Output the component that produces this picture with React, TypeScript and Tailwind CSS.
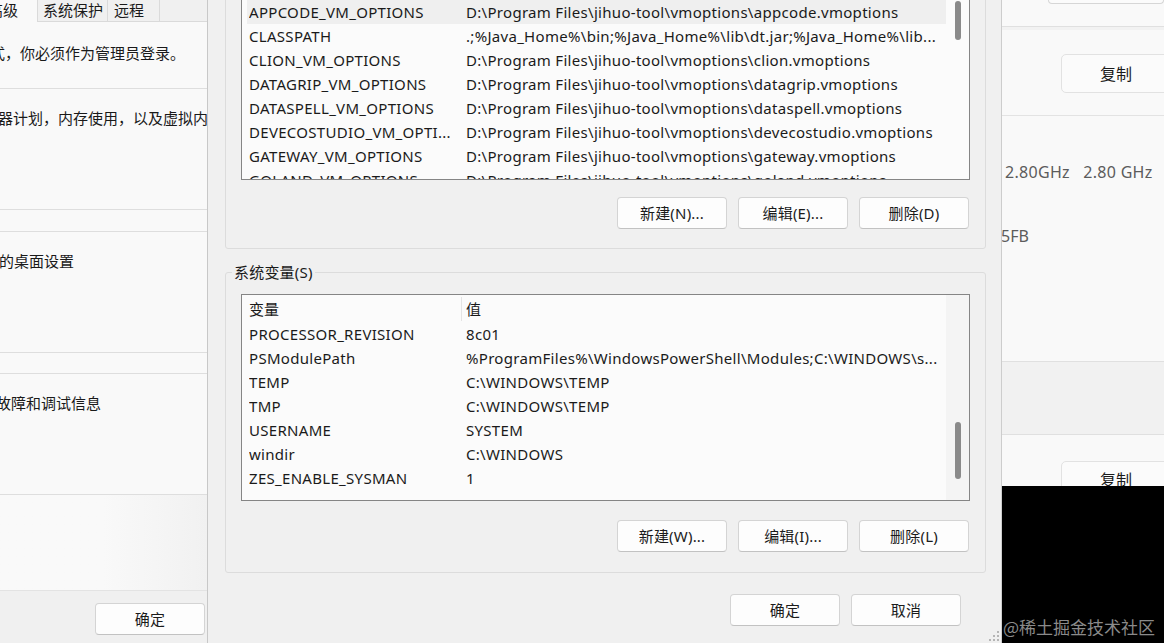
import React from "react";

type Row = [string, string];

const userVars: Row[] = [
  ["APPCODE_VM_OPTIONS", "D:\\Program Files\\jihuo-tool\\vmoptions\\appcode.vmoptions"],
  ["CLASSPATH", ".;%Java_Home%\\bin;%Java_Home%\\lib\\dt.jar;%Java_Home%\\lib..."],
  ["CLION_VM_OPTIONS", "D:\\Program Files\\jihuo-tool\\vmoptions\\clion.vmoptions"],
  ["DATAGRIP_VM_OPTIONS", "D:\\Program Files\\jihuo-tool\\vmoptions\\datagrip.vmoptions"],
  ["DATASPELL_VM_OPTIONS", "D:\\Program Files\\jihuo-tool\\vmoptions\\dataspell.vmoptions"],
  ["DEVECOSTUDIO_VM_OPTI...", "D:\\Program Files\\jihuo-tool\\vmoptions\\devecostudio.vmoptions"],
  ["GATEWAY_VM_OPTIONS", "D:\\Program Files\\jihuo-tool\\vmoptions\\gateway.vmoptions"],
  ["GOLAND_VM_OPTIONS", "D:\\Program Files\\jihuo-tool\\vmoptions\\goland.vmoptions"],
];

const systemVars: Row[] = [
  ["PROCESSOR_REVISION", "8c01"],
  ["PSModulePath", "%ProgramFiles%\\WindowsPowerShell\\Modules;C:\\WINDOWS\\s..."],
  ["TEMP", "C:\\WINDOWS\\TEMP"],
  ["TMP", "C:\\WINDOWS\\TEMP"],
  ["USERNAME", "SYSTEM"],
  ["windir", "C:\\WINDOWS"],
  ["ZES_ENABLE_SYSMAN", "1"],
];

function WinButton({ label }: { label: string }) {
  return (
    <button className="flex h-[32px] w-[110px] items-center justify-center rounded-[4px] border border-[#d4d4d4] border-b-[#c2c2c2] bg-[#fdfdfd] text-[15px] leading-[20px] tracking-[0.2px] text-[#1b1b1b]">
      {label}
    </button>
  );
}

function VarRow({ row, selected }: { row: Row; selected?: boolean }) {
  return (
    <div
      className={
        selected
          ? "flex h-[24px] items-center whitespace-nowrap bg-[#efefef] pl-[2px] tracking-[0.3px]"
          : "flex h-[24px] items-center whitespace-nowrap pl-[2px] tracking-[0.3px]"
      }
    >
      <div className="w-[217px] shrink-0 overflow-hidden">{row[0]}</div>
      <div className="overflow-hidden">{row[1]}</div>
    </div>
  );
}

export default function App() {
  return (
    <div className="relative h-[643px] w-[1164px] overflow-hidden bg-[#f0f0f0] font-['Noto_Sans','Noto_Sans_CJK_SC',sans-serif] text-[15px] leading-[20px] text-[#1a1a1a]">
      {/* left window: system properties, advanced tab */}
      <div className="absolute left-0 top-0 flex h-full w-[208px] flex-col overflow-hidden border-r border-[#c8c8c8] bg-[#f9f9f9]">
        <div className="flex h-[22px] shrink-0 border-b border-[#dadada] bg-[#f0f0f0] text-[15px] leading-[20px]">
          <div className="-mb-px w-[38px] shrink-0 overflow-hidden whitespace-nowrap border-r border-[#dadada] bg-[#f9f9f9]">
            <span className="ml-[-12px] inline-block">高级</span>
          </div>
          <div className="w-[70px] shrink-0 border-r border-[#dadada] pl-[5px]">系统保护</div>
          <div className="w-[52px] shrink-0 border-r border-[#dadada] pl-[6px]">远程</div>
        </div>
        <div className="h-[66px] shrink-0 overflow-hidden whitespace-nowrap pt-[21px]">
          <span className="ml-[-10px] inline-block">式，你必须作为管理员登录。</span>
        </div>
        <div className="h-[121px] shrink-0 overflow-hidden whitespace-nowrap border-t border-[#dedede] pt-[19px]">
          <span className="ml-[-2px] inline-block">器计划，内存使用，以及虚拟内存</span>
        </div>
        <div className="h-[22px] shrink-0 border-t border-[#dedede]" />
        <div className="h-[121px] shrink-0 overflow-hidden whitespace-nowrap border-t border-[#dedede] pt-[19px]">
          <span className="ml-[-1px] inline-block">的桌面设置</span>
        </div>
        <div className="h-[21px] shrink-0 border-t border-[#dedede]" />
        <div className="h-[121px] shrink-0 overflow-hidden whitespace-nowrap border-t border-[#dedede] pt-[19px]">
          <span className="ml-[-4px] inline-block">故障和调试信息</span>
        </div>
        <div className="flex-1 border-t border-[#dedede] bg-gradient-to-r from-[#f9f9f9] via-[#f9f9f9] to-[#f1f1f1]" />
        <div className="flex h-[53px] shrink-0 justify-end border-t border-[#e3e3e3] bg-[#f0f0f0] pr-[2px] pt-[12px]">
          <WinButton label="确定" />
        </div>
      </div>

      {/* middle dialog: environment variables */}
      <div className="absolute left-[208px] top-0 flex h-full w-[793px] flex-col bg-[#f0f0f0] px-[17px]">
        <div className="mt-[-30px] w-[761px] rounded-[3px] border border-[#dcdcdc] pb-[19px] pl-[15px] pr-[14px] pt-[28px]">
          <div className="flex h-[181px] w-[729px] border border-[#858585] bg-[#fbfbfb]">
            <div className="flex-1 overflow-hidden pl-[5px]">
              {userVars.map((r, i) => (
                <VarRow key={r[0]} row={r} selected={i === 0} />
              ))}
            </div>
            <div className="w-[23px] shrink-0 pl-[9px] pt-[1px]">
              <div className="h-[39px] w-[6px] rounded-full bg-[#8a8a8a]" />
            </div>
          </div>
          <div className="mt-[17px] flex justify-end gap-[11px] pr-[2px]">
            <WinButton label="新建(N)..." />
            <WinButton label="编辑(E)..." />
            <WinButton label="删除(D)" />
          </div>
        </div>

        <fieldset className="mt-[13px] w-[761px] rounded-[3px] border border-[#dcdcdc] pb-[20px]">
          <legend className="ml-[6px] px-[2px] text-[15px] leading-[20px] tracking-[0.2px]">系统变量(S)</legend>
          <div className="pl-[15px] pr-[14px]">
            <div className="mt-[12px] flex h-[207px] w-[729px] border border-[#858585] bg-[#fbfbfb]">
              <div className="flex-1 overflow-hidden pl-[5px]">
                <div className="flex h-[27px] items-center whitespace-nowrap pl-[2px] pt-[1px]">
                  <div className="w-[212px] shrink-0">变量</div>
                  <div className="mr-[4px] h-[24px] w-px bg-[#e4e4e4]" />
                  <div>值</div>
                </div>
                {systemVars.map((r) => (
                  <VarRow key={r[0]} row={r} />
                ))}
              </div>
              <div className="w-[23px] shrink-0 bg-[#f4f4f4] pl-[9px] pt-[127px]">
                <div className="h-[57px] w-[6px] rounded-full bg-[#8a8a8a]" />
              </div>
            </div>
            <div className="mt-[19px] flex justify-end gap-[11px] pr-[2px]">
              <WinButton label="新建(W)..." />
              <WinButton label="编辑(I)..." />
              <WinButton label="删除(L)" />
            </div>
          </div>
        </fieldset>

        <div className="mt-[21px] flex justify-end gap-[11px] pr-[23px]">
          <WinButton label="确定" />
          <WinButton label="取消" />
        </div>

        {/* resize grip */}
        <svg className="absolute bottom-[1px] right-[1px]" width="12" height="12" viewBox="0 0 12 12">
          {[
            [9, 1],
            [9, 5],
            [5, 5],
            [9, 9],
            [5, 9],
            [1, 9],
          ].map(([x, y]) => (
            <rect key={`${x}-${y}`} x={x} y={y} width="2" height="2" fill="#b5b5b5" />
          ))}
        </svg>
      </div>

      {/* right window: settings / about */}
      <div className="absolute left-[1001px] top-0 flex h-full w-[163px] flex-col overflow-hidden border-l border-[#cdcdcd] bg-[#f9f9f9]">
        <div className="ml-[46px] h-[4px] shrink-0 rounded-b-[5px] border-x border-b border-[#d6d6d6] bg-[#fbfbfb]" />
        <div className="mt-[22px] shrink-0 border-b border-[#e0e0e0]" />
        <div className="h-[3px] shrink-0 bg-[#f2f2f2]" />
        <div className="ml-[59px] mt-[24px] flex h-[39px] w-[110px] shrink-0 items-center justify-center rounded-[5px] border border-[#e2e2e2] bg-[#fbfbfb] text-[16px]">
          复制
        </div>
        <div className="mt-[22px] shrink-0 border-t border-[#e3e3e3]" />
        <div className="mt-[46px] shrink-0 whitespace-nowrap pl-[3px] text-[16px] tracking-[0.3px] text-[#5c5c5c]">
          2.80GHz&nbsp;&nbsp;&nbsp;2.80 GHz
        </div>
        <div className="ml-[-1px] mt-[44px] shrink-0 whitespace-nowrap text-[16px] text-[#5c5c5c]">5FB</div>
        <div className="mt-[115px] h-[74px] shrink-0 border-y border-[#e0e0e0] bg-[#f1f1f1]" />
        <div className="h-[51px] shrink-0 overflow-hidden">
          <div className="ml-[59px] mt-[26px] flex h-[39px] w-[110px] items-start justify-center rounded-[5px] border border-[#e2e2e2] bg-[#fbfbfb] pt-[8px] text-[16px]">
            复制
          </div>
        </div>
        <div className="flex-1 bg-black" />
      </div>

      {/* watermark */}
      <div className="absolute bottom-[4px] right-[9px] whitespace-nowrap font-['Noto_Sans_CJK_SC',sans-serif] text-[17px] leading-[24px] text-[#8a8a8a]">
        @稀土掘金技术社区
      </div>
    </div>
  );
}
